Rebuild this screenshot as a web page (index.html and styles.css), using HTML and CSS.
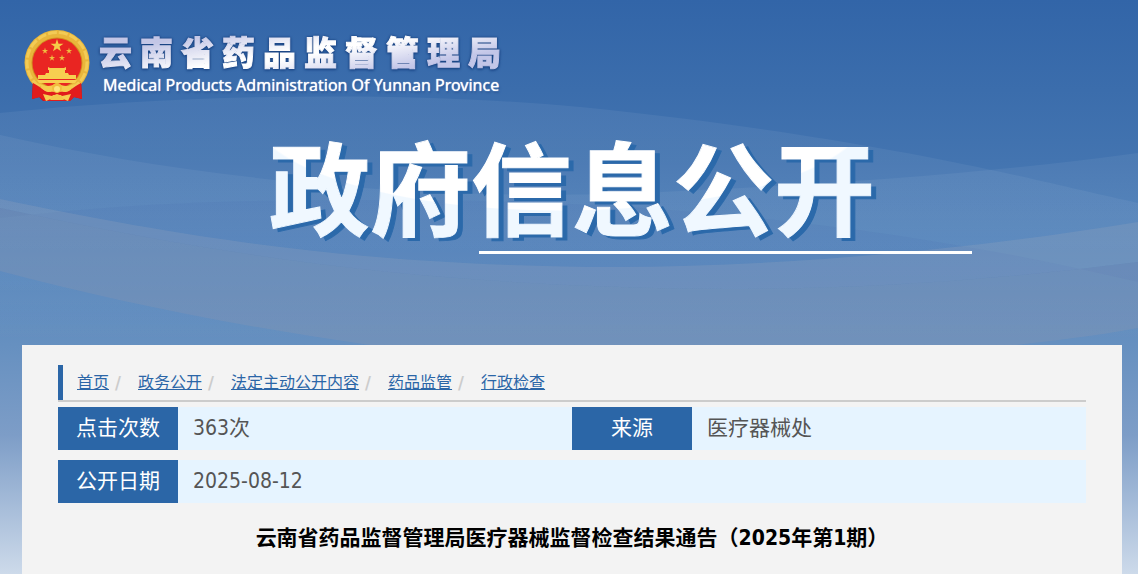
FILE: index.html
```html
<!DOCTYPE html>
<html lang="zh-CN">
<head>
<meta charset="utf-8">
<title>云南省药品监督管理局 政府信息公开</title>
<link rel="stylesheet" href="styles.css">
</head>
<body>
<div class="page">
  <svg class="waves" viewBox="0 0 1138 345" preserveAspectRatio="none" aria-hidden="true">
    <defs>
      <linearGradient id="fade" gradientUnits="userSpaceOnUse" x1="0" y1="90" x2="0" y2="345">
        <stop offset="0" stop-color="#fff" stop-opacity=".06"/>
        <stop offset=".5" stop-color="#fff" stop-opacity=".05"/>
        <stop offset="1" stop-color="#fff" stop-opacity="0"/>
      </linearGradient>
    </defs>
    <path fill="url(#fade)" d="M0 113C200 92 420 92 580 107C760 125 900 150 1001 172C1060 185 1100 195 1138 203V345H0Z"/>
    <path fill="url(#fade)" d="M0 135C200 180 450 206 700 190C850 183 1000 172 1138 153V345H0Z"/>
    <path fill="#3c5fa0" fill-opacity=".08" d="M0 218C150 201 250 200 400 200C650 200 900 225 1138 282V262C980 282 850 289 726 289C450 287 250 262 0 208Z"/>
    <path fill="#b4b4be" fill-opacity=".18" d="M0 199C250 252 420 266 617 267C800 266 980 248 1138 222V262C980 282 850 289 726 289C450 287 250 262 0 208Z"/>
    <path fill="#a09aa8" fill-opacity=".2" d="M0 208C250 262 450 287 726 289C850 289 980 282 1138 262V328C1100 335 1060 340 1016 345H370C230 325 110 300 0 271Z"/>
  </svg>
  <header class="site-header">
    <a class="brand" href="#">
      <svg class="emblem" viewBox="0 0 66 71" role="img" aria-label="国徽">
        <path fill="#c90f13" d="M9 48L22 56H44L57 48L58 69L50 67L46 71H19L15 67L8 69Z"/>
        <circle cx="33" cy="32.500" r="32.500" fill="#e9b63b"/>
        <circle cx="33" cy="32.500" r="30" fill="none" stroke="#f3cb55" stroke-width="3" stroke-dasharray="9 2"/>
        <circle cx="33" cy="33" r="25.500" fill="#d28d21"/>
        <circle cx="33" cy="33" r="24.500" fill="#e92522"/>
        <path fill="#f5cb48" d="M33 9L34.500 13.700H39.500L35.500 16.600L37 21.300L33 18.400L29 21.300L30.500 16.600L26.500 13.700H31.500Z"/>
        <g fill="#f0bd3f">
          <path id="star" d="M21 17.500L21.700 19.900H24.200L22.200 21.300L22.900 23.700L21 22.200L19.100 23.700L19.800 21.300L17.800 19.900H20.300Z"/>
          <use href="#star" x="24"/>
          <use href="#star" x="7" y="7"/>
          <use href="#star" x="17" y="7"/>
        </g>
        <path fill="#f7cf50" d="M24 37L26 38H40L42 37V40H24ZM25 40H41V43H25ZM22 43H44L45 45H21ZM14 45H52V49H14ZM13 50H53L51 53H15Z"/>
        <path fill="#e11c1c" d="M9 53C17 57 22 63 25 62C30 59 36 59 41 62C44 63 49 57 57 53L58 69L50 67L46 71H20L16 67L8 69Z"/>
        <path fill="#f5cc4d" d="M14 53C23 58 27 56 33 53C39 56 43 58 52 53L46 60C40 64 37 60 33 63C29 60 26 64 20 60Z"/>
        <path fill="#f6cf51" d="M19 64L28 66L33 64L38 66L47 64L44 71L37 68H29L22 71Z"/>
        <circle cx="33" cy="58" r="5" fill="#f1bd3e"/><circle cx="33" cy="59" r="3" fill="#ffe27a"/>
        <path fill="#f4c749" d="M29 65H37L40 70H26Z"/>
      </svg>
      <span class="brand-text">
        <span class="brand-name">云南省药品监督管理局</span>
        <span class="brand-en" lang="en">Medical Products Administration Of Yunnan Province</span>
      </span>
    </a>
    <div class="hero">
      <h1 class="hero-title">政府信息公开</h1>
      <div class="hero-rule"></div>
    </div>
  </header>
  <main class="panel">
    <nav class="crumbs" aria-label="当前位置">
      <ol class="crumb-list">
        <li><a href="#">首页</a></li>
        <li><a href="#">政务公开</a></li>
        <li><a href="#">法定主动公开内容</a></li>
        <li><a href="#">药品监管</a></li>
        <li><a href="#">行政检查</a></li>
      </ol>
    </nav>
    <table class="meta">
      <tr><th scope="row">点击次数</th><td>363次</td><th scope="row">来源</th><td>医疗器械处</td></tr>
      <tr><th scope="row">公开日期</th><td colspan="3">2025-08-12</td></tr>
    </table>
    <h2 class="article-title">云南省药品监督管理局医疗器械监督检查结果通告（2025年第1期）</h2>
  </main>
</div>
</body>
</html>
```
FILE: styles.css
```css
*, *::before { box-sizing: border-box; }
body {
  margin: 0;
  font-family: "DejaVu Sans Condensed", "Noto Sans CJK SC", sans-serif;
  color: #555;
}
.page {
  position: relative;
  display: flex;
  flex-direction: column;
  min-height: 100vh;
  padding: 0 16px 0 22px;
  background: linear-gradient(#3265a8 0, #3b6dac 90px, #4374b0 160px, #5182ba 250px, #6690c0 345px, #7d9dc7 435px, #cddaea 574px);
}
.waves {
  position: absolute;
  top: 0;
  left: 0;
  width: 100%;
  height: 345px;
}
.site-header { position: relative; padding-top: 30px; }
.brand {
  display: flex;
  width: max-content;
  gap: 9px;
  padding-left: 2px;
  text-decoration: none;
  color: #fff;
}
.emblem { width: 66px; height: 71px; }
.brand-text { display: flex; flex-direction: column; width: 402px; }
.brand-name {
  font-family: "Noto Sans CJK SC", sans-serif;
  font-size: 33px;
  font-weight: 900;
  line-height: 43px;
  text-align: justify;
  text-align-last: justify;
  color: transparent;
  -webkit-text-stroke: 1px transparent;
  background: linear-gradient(170deg, #c3c6e6 20%, #fff 48%, #fff 54%, #c3c6e8 80%);
  -webkit-background-clip: text;
  background-clip: text;
  filter: drop-shadow(0 0 1px #173f7d) drop-shadow(0 1px 1px #1e4b8c);
}
.brand-en {
  padding-left: 4px;
  font-family: "Noto Sans", sans-serif;
  font-size: 16px;
  line-height: 24px;
  white-space: nowrap;
  text-shadow: 0 0 1px #fff, 1px 2px 2px #2a5797;
}
.hero {
  display: flex;
  flex-direction: column;
  align-items: center;
  padding-bottom: 91px;
}
.hero-title {
  margin: 20px 0 0;
  padding-bottom: 4px;
  font-family: "Noto Sans CJK SC", sans-serif;
  font-size: 101px;
  font-weight: 700;
  line-height: 126px;
  color: transparent;
  -webkit-text-stroke: 1px transparent;
  background: radial-gradient(ellipse 310px 100px at 48% -10px, #fff 99%, #f0f8ff 100%);
  -webkit-background-clip: text;
  background-clip: text;
  filter: drop-shadow(5px 3px 0 #2b69aa);
}
.hero-rule {
  width: 493px;
  height: 3px;
  margin-left: 307px;
  background: #fff;
}
.panel {
  position: relative;
  flex: 1;
  padding: 20px 36px;
  background: #f3f3f3;
}
.crumbs { border-bottom: 2px solid #ccc; }
.crumb-list {
  display: flex;
  margin: 0;
  padding: 0 0 0 14px;
  border-left: 5px solid #2b66a7;
  list-style: none;
  font-size: 16px;
  line-height: 35px;
}
.crumb-list li { display: flex; }
.crumb-list li + li::before {
  content: "/";
  width: 29px;
  padding-left: 6px;
  font-size: 18px;
  font-weight: 700;
  color: #ccc;
}
.crumb-list a { color: #2b66a7; }
.meta {
  width: 100%;
  margin-top: 5px;
  border-spacing: 0;
  table-layout: fixed;
  font-size: 21px;
  line-height: 43px;
}
.meta th, .meta td {
  padding: 0;
  border-bottom: 10px solid #f3f3f3;
  font-weight: 400;
}
.meta th { width: 120px; background: #2b66a7; color: #fff; text-align: center; }
.meta td { padding-left: 15px; background: #e6f4ff; }
.article-title {
  margin: 8px 0 0;
  font-size: 21px;
  line-height: 34px;
  text-align: center;
  color: #000;
}
```
